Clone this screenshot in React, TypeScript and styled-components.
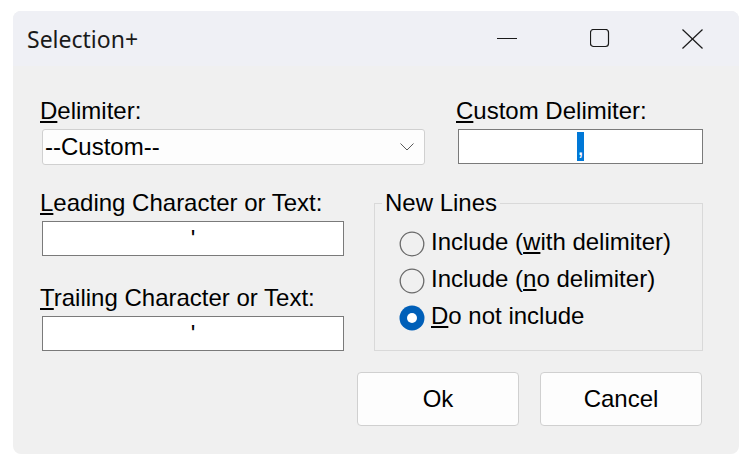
import React from "react";
import styled, { createGlobalStyle } from "styled-components";

const GlobalStyle = createGlobalStyle`
  html, body { margin: 0; padding: 0; background: #ffffff; }
  body { width: 756px; height: 472px; overflow: hidden; }
  * { box-sizing: border-box; }
`;

const Page = styled.div`
  padding: 11px 0 0 13px;
`;

const Window = styled.div`
  width: 726px;
  height: 443px;
  border-radius: 8px;
  overflow: hidden;
  background: #f0f0f0;
  display: flex;
  flex-direction: column;
  font-family: "Liberation Sans", Arial, sans-serif;
  font-size: 24px;
  color: #000;
`;

const TitleBar = styled.div`
  height: 55px;
  flex: none;
  display: flex;
  align-items: center;
  background: #eff0f5;
`;

const Title = styled.div`
  flex: 1;
  padding-left: 14px;
  font-family: "Segoe UI", "Noto Sans", sans-serif;
  font-size: 23px;
  color: #1a1a1a;
`;

const CaptionButton = styled.div`
  width: 93px;
  height: 55px;
  display: flex;
  align-items: center;
  justify-content: center;
`;

const Body = styled.div`
  flex: 1;
  display: flex;
  flex-direction: column;
  padding: 32px 36px 0 29px;
`;

const TopRow = styled.div`
  display: grid;
  grid-template-columns: 383px 1fr;
  column-gap: 33px;
`;

const MidRow = styled.div`
  display: grid;
  grid-template-columns: 302px 329px;
  column-gap: 30px;
  margin-top: 25px;
`;

const Column = styled.div`
  display: flex;
  flex-direction: column;
  gap: 29px;
`;

const Field = styled.div`
  display: flex;
  flex-direction: column;
  gap: 5px;
`;

const Label = styled.div`
  line-height: 26px;
  white-space: nowrap;
  margin-left: -2px;
`;

const Select = styled.div`
  height: 36px;
  display: flex;
  align-items: center;
  justify-content: space-between;
  padding: 0 10px 0 2px;
  background: #fdfdfd;
  border: 1px solid #d0d0d0;
  border-radius: 3px;
  line-height: 26px;
`;

const TextBox = styled.div<{ $height: number }>`
  height: ${(p) => p.$height}px;
  display: flex;
  align-items: center;
  justify-content: center;
  background: #ffffff;
  border: 1px solid #7a7a7a;
  line-height: 26px;
`;

const Selected = styled.span`
  background: #0078d7;
  color: #ffffff;
  line-height: 29px;
  padding: 0 0.5px;
`;

const GroupBox = styled.fieldset`
  margin: 0;
  padding: 0 0 0 7px;
  border: 1px solid #d9d9d9;
  min-inline-size: 0;
`;

const Legend = styled.legend`
  padding: 0 3px;
  line-height: 26px;
`;

const RadioList = styled.div`
  display: flex;
  flex-direction: column;
  padding: 7px 0 0 17px;
`;

const RadioRow = styled.div`
  height: 37px;
  display: flex;
  align-items: center;
  gap: 6px;
  white-space: nowrap;
  line-height: 26px;
`;

const RadioIcon = styled.svg`
  flex: none;
  margin-top: 4px;
`;

const ButtonRow = styled.div`
  display: flex;
  justify-content: flex-end;
  gap: 21px;
  margin-top: 21px;
  padding-right: 1px;
`;

const Button = styled.div`
  width: 162px;
  height: 54px;
  display: flex;
  align-items: center;
  justify-content: center;
  background: #fdfdfd;
  border: 1px solid #d0d0d0;
  border-radius: 4px;
`;

const Radio = ({ checked }: { checked?: boolean }) => (
  <RadioIcon width="26" height="26" viewBox="0 0 26 26">
    {checked ? (
      <>
        <circle cx="13" cy="13" r="12.5" fill="#005fb8" />
        <circle cx="13" cy="13" r="5" fill="#ffffff" />
      </>
    ) : (
      <circle cx="13" cy="13" r="11.8" fill="none" stroke="#6a6a6a" strokeWidth="1.3" />
    )}
  </RadioIcon>
);

const Chevron = () => (
  <svg width="14" height="8" viewBox="0 0 14 8">
    <polyline points="0.5,0.5 7,7 13.5,0.5" fill="none" stroke="#5a5a5a" strokeWidth="1" />
  </svg>
);

export default function App() {
  return (
    <>
      <GlobalStyle />
      <Page>
        <Window>
          <TitleBar>
            <Title>Selection+</Title>
            <CaptionButton>
              <svg width="20" height="20" viewBox="0 0 20 20">
                <line x1="0" y1="9.5" x2="20" y2="9.5" stroke="#1a1a1a" strokeWidth="1" />
              </svg>
            </CaptionButton>
            <CaptionButton>
              <svg width="20" height="19" viewBox="0 0 20 19">
                <rect x="0.5" y="0.5" width="18" height="17" rx="3" fill="none" stroke="#1a1a1a" strokeWidth="1.2" />
              </svg>
            </CaptionButton>
            <CaptionButton>
              <svg width="21" height="20" viewBox="0 0 21 20">
                <line x1="0.5" y1="0.5" x2="20.5" y2="19.5" stroke="#1a1a1a" strokeWidth="1.2" />
                <line x1="20.5" y1="0.5" x2="0.5" y2="19.5" stroke="#1a1a1a" strokeWidth="1.2" />
              </svg>
            </CaptionButton>
          </TitleBar>
          <Body>
            <TopRow>
              <Field>
                <Label>
                  <u>D</u>elimiter:
                </Label>
                <Select>
                  <span>--Custom--</span>
                  <Chevron />
                </Select>
              </Field>
              <Field>
                <Label>
                  <u>C</u>ustom Delimiter:
                </Label>
                <TextBox $height={35}>
                  <Selected>,</Selected>
                </TextBox>
              </Field>
            </TopRow>
            <MidRow>
              <Column>
                <Field>
                  <Label>
                    <u>L</u>eading Character or Text:
                  </Label>
                  <TextBox $height={35}>'</TextBox>
                </Field>
                <Field>
                  <Label>
                    <u>T</u>railing Character or Text:
                  </Label>
                  <TextBox $height={35}>'</TextBox>
                </Field>
              </Column>
              <GroupBox>
                <Legend>New Lines</Legend>
                <RadioList>
                  <RadioRow>
                    <Radio />
                    <span>
                      Include (<u>w</u>ith delimiter)
                    </span>
                  </RadioRow>
                  <RadioRow>
                    <Radio />
                    <span>
                      Include (<u>n</u>o delimiter)
                    </span>
                  </RadioRow>
                  <RadioRow>
                    <Radio checked />
                    <span>
                      <u>D</u>o not include
                    </span>
                  </RadioRow>
                </RadioList>
              </GroupBox>
            </MidRow>
            <ButtonRow>
              <Button>Ok</Button>
              <Button>Cancel</Button>
            </ButtonRow>
          </Body>
        </Window>
      </Page>
    </>
  );
}
